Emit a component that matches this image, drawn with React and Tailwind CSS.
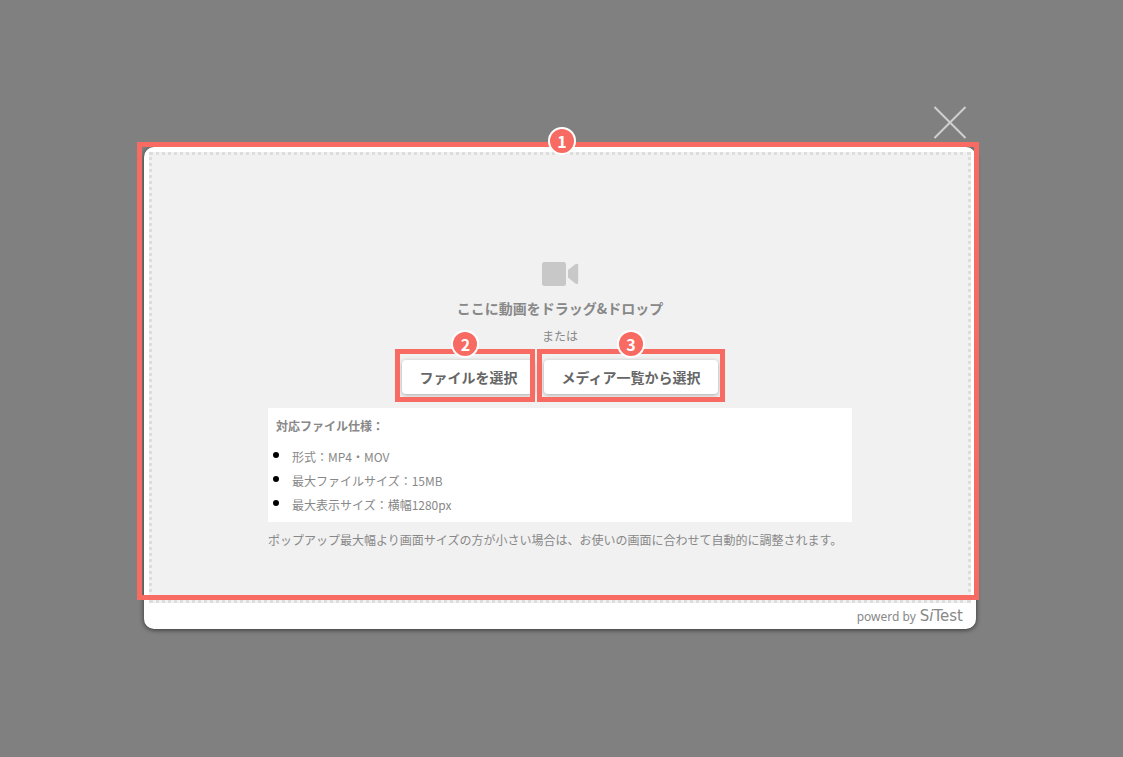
const specs = [
  "形式：MP4・MOV",
  "最大ファイルサイズ：15MB",
  "最大表示サイズ：横幅1280px",
];

const Marker = ({ number, className, badgeClassName = "left-1/2 -top-6" }) => (
  <div
    className={`absolute border-5 border-[#f86b62] pointer-events-none ${className}`}
  >
    <span
      className={`absolute -translate-x-1/2 flex items-center justify-center w-7 h-7 rounded-full border-2 border-white bg-[#f86b62] text-white text-[16px] leading-none font-bold ${badgeClassName}`}
    >
      {number}
    </span>
  </div>
);

const UploadButton = ({ children }) => (
  <button
    type="button"
    className="h-[34px] px-[17px] rounded-sm bg-white text-[#666] text-[14px] font-bold whitespace-nowrap shadow-[0_1px_4px_rgba(0,0,0,0.3)]"
  >
    {children}
  </button>
);

const VideoIcon = () => (
  <svg width="37" height="24" viewBox="0 0 37 24" fill="#c8c8c8" aria-hidden="true">
    <rect x="0" y="0" width="24" height="24" rx="2.500" />
    <path d="M26 8L33 2.400Q34 1.700 35 1.700Q36.200 1.700 36.200 3V20.500Q36.200 22 35 22Q34 22 33 21.300L26 15.500Z" />
  </svg>
);

const App = () => {
  return (
    <div
      lang="ja"
      className="min-h-screen bg-[#808080] pt-[106px] pb-12 pr-[3px] font-['Noto_Sans_CJK_JP',sans-serif] text-[#888]"
    >
      <div className="w-full max-w-[832px] mx-auto">
        <div className="flex justify-end pr-[9px] pb-2">
          <button type="button" aria-label="閉じる">
            <svg width="34" height="33" viewBox="0 0 34 33" className="block" aria-hidden="true">
              <path d="M1.500 1L32.500 32M32.500 1L1.500 32" stroke="#d0d0d0" strokeWidth="2" />
            </svg>
          </button>
        </div>

        <div className="relative bg-white rounded-[10px] pt-[5px] px-[5px] shadow-[0_1px_5px_rgba(0,0,0,0.6)]">
          <div className="flex flex-col items-center bg-[#f1f1f1] border-3 border-dotted border-[#ddd] pt-[107px] pb-12 px-4">
            <VideoIcon />
            <h1 className="mt-3 text-[14px] leading-5 font-bold">
              ここに動画をドラッグ&ドロップ
            </h1>
            <p className="mt-[10px] text-[12px] leading-4">または</p>

            <div className="mt-4 flex gap-[10px]">
              <div className="relative">
                <UploadButton>ファイルを選択</UploadButton>
                <Marker number={2} className="-top-[11px] -bottom-2 -left-[7px] -right-px" />
              </div>
              <div className="relative">
                <UploadButton>メディア一覧から選択</UploadButton>
                <Marker number={3} className="-top-[11px] -bottom-2 -left-[7px] -right-[7px]" />
              </div>
            </div>

            <div className="w-full max-w-[584px] mt-[14px]">
              <div className="bg-white pt-[6px] pb-[5px] px-2">
                <h2 className="text-[12px] leading-6 font-bold">対応ファイル仕様：</h2>
                <ul className="mt-[7px] text-[12px] leading-6">
                  {specs.map((spec) => (
                    <li
                      key={spec}
                      className="relative pl-4 before:absolute before:-left-[3px] before:top-[7px] before:w-[6px] before:h-[6px] before:rounded-full before:bg-black"
                    >
                      {spec}
                    </li>
                  ))}
                </ul>
              </div>
              <p className="mt-[6px] text-[12px] leading-6">
                ポップアップ最大幅より画面サイズの方が小さい場合は、お使いの画面に合わせて自動的に調整されます。
              </p>
            </div>
          </div>

          <footer className="flex items-center justify-end gap-1 h-[26px] pt-px pr-2 text-[12px]">
            <span className="font-['Noto_Sans',sans-serif]">powerd by</span>
            <span className="font-['DejaVu_Sans',sans-serif] text-[15px] leading-none">
              S<i>i</i>Test
            </span>
          </footer>

          <Marker
            number={1}
            className="-top-[5px] bottom-[29px] -left-[7px] -right-[3px]"
            badgeClassName="left-[calc(50%+4px)] -top-5"
          />
        </div>
      </div>
    </div>
  );
};

export default App;
